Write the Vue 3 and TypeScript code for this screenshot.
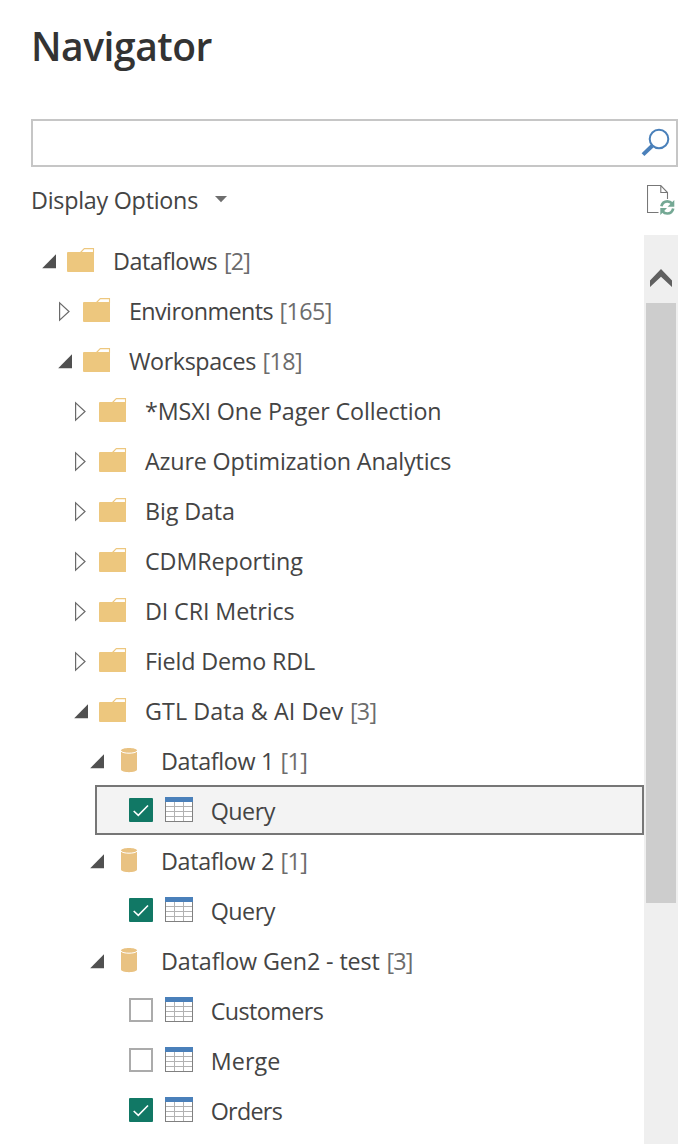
<script setup lang="ts">
import { nextTick, onMounted, ref } from 'vue'

type Kind = 'folder' | 'database' | 'table'

interface TreeRow {
  kind: Kind
  level: number
  label: string
  width: number
  count?: number
  countWidth?: number
  open?: boolean
  checked?: boolean
  selected?: boolean
}

const rows = ref<TreeRow[]>([
  { kind: 'folder', level: 0, label: 'Dataflows', width: 104.3, count: 2, countWidth: 26.2, open: true },
  { kind: 'folder', level: 1, label: 'Environments', width: 143.9, count: 165, countWidth: 52.4 },
  { kind: 'folder', level: 1, label: 'Workspaces', width: 126.9, count: 18, countWidth: 39.5, open: true },
  { kind: 'folder', level: 2, label: '*MSXI One Pager Collection', width: 296.5 },
  { kind: 'folder', level: 2, label: 'Azure Optimization Analytics', width: 306.3 },
  { kind: 'folder', level: 2, label: 'Big Data', width: 89.8 },
  { kind: 'folder', level: 2, label: 'CDMReporting', width: 157.8 },
  { kind: 'folder', level: 2, label: 'DI CRI Metrics', width: 149.5 },
  { kind: 'folder', level: 2, label: 'Field Demo RDL', width: 170 },
  { kind: 'folder', level: 2, label: 'GTL Data & AI Dev', width: 198.3, count: 3, countWidth: 26.6, open: true },
  { kind: 'database', level: 3, label: 'Dataflow 1', width: 113, count: 1, countWidth: 26.6, open: true },
  { kind: 'table', level: 3, label: 'Query', width: 64.2, checked: true, selected: true },
  { kind: 'database', level: 3, label: 'Dataflow 2', width: 113, count: 1, countWidth: 26.6, open: true },
  { kind: 'table', level: 3, label: 'Query', width: 64.2, checked: true },
  { kind: 'database', level: 3, label: 'Dataflow Gen2 - test', width: 218.8, count: 3, countWidth: 26.2, open: true },
  { kind: 'table', level: 3, label: 'Customers', width: 112.5 },
  { kind: 'table', level: 3, label: 'Merge', width: 69.7 },
  { kind: 'table', level: 3, label: 'Orders', width: 71.4, checked: true },
])

const search = ref('')
const root = ref<HTMLElement | null>(null)

// Spreads the letters of each label so that it fills its nominal width.
function fitLabels() {
  root.value?.querySelectorAll<HTMLElement>('[data-fit]').forEach((el) => {
    el.style.letterSpacing = '0px'
    const natural = el.getBoundingClientRect().width
    const length = el.textContent?.length ?? 1
    el.style.letterSpacing = `${(Number(el.dataset.fit) - natural) / length}px`
  })
}

function select(row: TreeRow) {
  rows.value.forEach((r) => (r.selected = r === row))
}

onMounted(async () => {
  await nextTick()
  fitLabels()
  await document.fonts.ready
  fitLabels()
})
</script>

<template>
  <main ref="root" class="navigator">
    <h1 class="title"><span data-fit="181">Navigator</span></h1>

    <label class="search">
      <input v-model="search" type="text" aria-label="Search" />
      <svg class="lens" width="30" height="30" viewBox="0 0 30 30">
        <circle cx="18" cy="11" r="9.3" fill="none" stroke="#4a80ba" stroke-width="2" />
        <path d="M11.3 17.7 2 26.6" stroke="#4a80ba" stroke-width="4" />
      </svg>
    </label>

    <div class="options">
      <button class="display"><span data-fit="167">Display Options</span>
        <svg class="caret" width="12" height="7" viewBox="0 0 12 7"><path d="M0 0h12L6 6.3z" fill="#6e6e6e" /></svg>
      </button>
      <svg class="refresh" width="28" height="31" viewBox="0 0 28 31">
        <path d="M11.5 28.5H.5V1.5h13.3l6.7 7V15M13.8 1.5v7h6.7" fill="none" stroke="#777" stroke-width="1.1" />
        <g fill="none" stroke="#74a894" stroke-width="2.7">
          <path d="M14.4 22.3c.7-3.3 3.2-5 6-5 2 0 3.4.7 4.6 2.1" />
          <path d="M26.2 24.5c-.7 3.3-3.2 5-6 5-2 0-3.4-.7-4.6-2.1" />
        </g>
        <path d="M27.3 16v6.7h-6.7zM13.3 31v-6.9H20z" fill="#74a894" />
      </svg>
    </div>

    <div class="body">
      <ul class="tree">
        <li
          v-for="(row, i) in rows"
          :key="i"
          :class="['row', row.kind, 'level-' + row.level, { selected: row.selected }]"
          @click="select(row)"
        >
          <template v-if="row.kind !== 'table'">
            <svg class="arrow" width="16" height="50" viewBox="0 0 16 50">
              <path v-if="row.open" d="M.2 33.2h13.8V19.2z" fill="#505050" />
              <path v-else d="M1.6 17.9v17.2l9.4-8.6z" fill="#fff" stroke="#6a6a6a" stroke-width="1.2" />
            </svg>
          </template>
          <span v-else :class="['check', { on: row.checked }]">
            <svg v-if="row.checked" width="24" height="24" viewBox="0 0 24 24">
              <path d="m4.7 13 4.6 4.3L19 7.5" fill="none" stroke="#fff" stroke-width="1.6" />
            </svg>
          </span>

          <svg v-if="row.kind === 'folder'" class="icon" width="28" height="50" viewBox="0 0 28 50">
            <path d="M13.5 17.5 17.3 13.6H26.5V18" fill="#fff" stroke="#edc77e" stroke-width="1.1" />
            <path d="M0 18q0-1 1-1h26v20H1q-1 0-1-1z" fill="#edc77e" />
          </svg>
          <svg v-else-if="row.kind === 'database'" class="icon" width="16" height="50" viewBox="0 0 16 50">
            <path d="M0 15.5C0 12 16 12 16 15.5v19c0 3.5-16 3.5-16 0z" fill="#e9c282" />
            <path d="M0 16.1c1.6 2.8 14.4 2.8 16 0" fill="none" stroke="#fff" stroke-width="1" />
          </svg>
          <svg v-else class="icon" width="28" height="50" viewBox="0 0 28 50" shape-rendering="crispEdges">
            <path d="M0 12h28v25H0z" fill="#fff" />
            <path d="M9.5 17v19M18.5 17v19M1 21.5h26M1 26.5h26M1 31.5h26" stroke="#b2b2b2" />
            <path d="M.5 17v19.5h27V17" fill="none" stroke="#808080" />
            <path d="M0 12h28v5H0z" fill="#4a80ba" />
          </svg>

          <span class="label" :data-fit="row.width">{{ row.label }}</span>
          <span v-if="row.count" class="count" :data-fit="row.countWidth">[{{ row.count }}]</span>
        </li>
      </ul>
      <div class="scrollbar">
        <svg class="up" width="34" height="68" viewBox="0 0 34 68">
          <path d="M6 45.4 17 34l11 11.4v6.6L17 41.8 6 52z" fill="#606060" />
        </svg>
        <div class="thumb"></div>
      </div>
    </div>
  </main>
</template>

<style>
body {
  margin: 0;
  background: #fff;
}
</style>

<style scoped>
.navigator {
  box-sizing: border-box;
  height: 1144px;
  padding: 0 14px 0 31px;
  overflow: hidden;
  display: flex;
  flex-direction: column;
  color: #444;
  font-family: 'Open Sans', 'Noto Sans', sans-serif;
  font-size: 23.3px;
  white-space: nowrap;
}
.title {
  margin: 0;
  height: 119px;
  flex: none;
  color: #333;
  font-size: 39px;
  font-weight: 600;
  line-height: 92px;
}
.search {
  box-sizing: border-box;
  flex: none;
  display: flex;
  align-items: flex-start;
  height: 48px;
  border: 2px solid #c6c6c6;
  padding: 7px 5px 0 0;
}
.search input {
  flex: 1;
  height: 30px;
  border: 0;
  padding: 0 10px;
  outline: 0;
  background: transparent;
  font: inherit;
}
.options {
  flex: none;
  height: 68px;
  display: flex;
  justify-content: space-between;
}
.display {
  display: flex;
  align-items: flex-start;
  height: 68px;
  padding: 0;
  border: 0;
  background: none;
  color: inherit;
  font: inherit;
  line-height: 66px;
}
.caret {
  margin: 29px 0 0 16.5px;
}
.refresh {
  margin: 17px 3px 0 0;
}
.body {
  flex: 1;
  display: flex;
  min-height: 0;
}
.tree {
  flex: 1;
  margin: 0;
  padding: 0;
  list-style: none;
}
.row {
  box-sizing: border-box;
  display: flex;
  height: 50px;
  line-height: 52px;
}
.arrow {
  flex: none;
  margin-right: 9px;
}
.icon {
  flex: none;
}
.level-0 {
  padding-left: 11px;
}
.level-1 {
  padding-left: 27px;
}
.level-2 {
  padding-left: 43px;
}
.level-3 {
  padding-left: 59px;
}
.folder .icon {
  margin-right: 18px;
}
.database .arrow {
  margin-right: 15px;
}
.database .icon {
  margin-right: 24px;
}
.table {
  margin-left: 64px;
  padding-left: 34px;
}
.table .icon {
  margin: 0 17.7px 0 12px;
}
.selected {
  background: #f3f3f3;
  box-shadow: inset 0 0 0 2px #767676;
}
.check {
  box-sizing: border-box;
  flex: none;
  width: 24px;
  height: 24px;
  margin-top: 13px;
  border: 2px solid #ababab;
  background: #fff;
}
.check.on {
  border: 0;
  border-radius: 1px;
  background: #117865;
}
.check svg {
  display: block;
}
.count {
  margin-left: 6.6px;
  color: #6c6c6c;
}
.scrollbar {
  flex: none;
  width: 34px;
  background: #efefef;
}
.up {
  display: block;
}
.thumb {
  height: 600px;
  margin: 0 2px;
  background: #cdcdcd;
}
</style>
